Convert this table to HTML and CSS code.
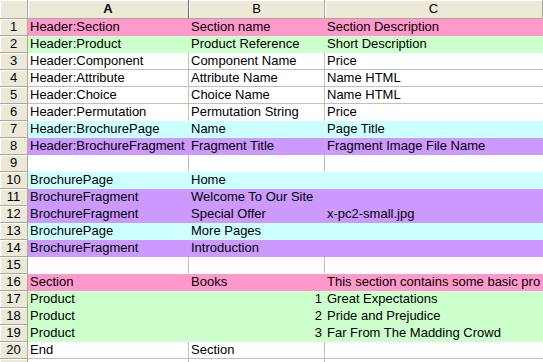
FILE: index.html
```html
<!DOCTYPE html>
<html>
<head>
<meta charset="utf-8">
<link rel="stylesheet" href="styles.css">
</head>
<body>
<div class="sheet">
  <div class="row head">
    <div class="corner"></div>
    <div class="ch sel">A</div>
    <div class="ch">B</div>
    <div class="ch">C</div>
  </div>
  <div class="row pink"><div class="rh">1</div><div class="c">Header:Section</div><div class="c">Section name</div><div class="c">Section Description</div></div>
  <div class="row green"><div class="rh">2</div><div class="c">Header:Product</div><div class="c">Product Reference</div><div class="c">Short Description</div></div>
  <div class="row"><div class="rh">3</div><div class="c">Header:Component</div><div class="c">Component Name</div><div class="c">Price</div></div>
  <div class="row"><div class="rh">4</div><div class="c">Header:Attribute</div><div class="c">Attribute Name</div><div class="c">Name HTML</div></div>
  <div class="row"><div class="rh">5</div><div class="c">Header:Choice</div><div class="c">Choice Name</div><div class="c">Name HTML</div></div>
  <div class="row nb"><div class="rh">6</div><div class="c">Header:Permutation</div><div class="c">Permutation String</div><div class="c">Price</div></div>
  <div class="row cyan"><div class="rh">7</div><div class="c">Header:BrochurePage</div><div class="c">Name</div><div class="c">Page Title</div></div>
  <div class="row lav"><div class="rh">8</div><div class="c">Header:BrochureFragment</div><div class="c">Fragment Title</div><div class="c">Fragment Image File Name</div></div>
  <div class="row nb"><div class="rh">9</div><div class="c"></div><div class="c"></div><div class="c"></div></div>
  <div class="row cyan"><div class="rh">10</div><div class="c">BrochurePage</div><div class="c">Home</div><div class="c"></div></div>
  <div class="row lav"><div class="rh">11</div><div class="c">BrochureFragment</div><div class="c">Welcome To Our Site</div><div class="c"></div></div>
  <div class="row lav"><div class="rh">12</div><div class="c">BrochureFragment</div><div class="c">Special Offer</div><div class="c">x-pc2-small.jpg</div></div>
  <div class="row cyan"><div class="rh">13</div><div class="c">BrochurePage</div><div class="c">More Pages</div><div class="c"></div></div>
  <div class="row lav"><div class="rh">14</div><div class="c">BrochureFragment</div><div class="c">Introduction</div><div class="c"></div></div>
  <div class="row nb"><div class="rh">15</div><div class="c"></div><div class="c"></div><div class="c"></div></div>
  <div class="row pink"><div class="rh">16</div><div class="c">Section</div><div class="c">Books</div><div class="c">This section contains some basic pro</div></div>
  <div class="row green"><div class="rh">17</div><div class="c">Product</div><div class="c num">1</div><div class="c">Great Expectations</div></div>
  <div class="row green"><div class="rh">18</div><div class="c">Product</div><div class="c num">2</div><div class="c">Pride and Prejudice</div></div>
  <div class="row green"><div class="rh">19</div><div class="c">Product</div><div class="c num">3</div><div class="c">Far From The Madding Crowd</div></div>
  <div class="row"><div class="rh">20</div><div class="c">End</div><div class="c">Section</div><div class="c"></div></div>
  <div class="row"><div class="rh"></div><div class="c"></div><div class="c"></div><div class="c"></div></div>
</div>
</body>
</html>
```
FILE: styles.css
```css
html, body {
  margin: 0;
  padding: 0;
  background: #ffffff;
}
body {
  width: 543px;
  height: 362px;
  overflow: hidden;
  font-family: "Liberation Sans", Arial, sans-serif;
  font-size: 13px;
  color: #000000;
}
.sheet {
  display: grid;
  grid-template-columns: 28px 161px 136px 1fr;
  grid-template-rows: 19px;
  grid-auto-rows: 17px;
  width: 543px;
}
.row {
  display: contents;
}
.corner,
.ch {
  box-sizing: border-box;
  background: #ece9d8;
  border-bottom: 1px solid #aca899;
  border-right: 1px solid #aca899;
  box-shadow: inset 1px 1px 0 #ffffff;
  text-align: center;
  line-height: 18px;
}
.ch.sel {
  font-weight: bold;
  border-right-color: #716f64;
}
.rh {
  box-sizing: border-box;
  background: #ece9d8;
  border-bottom: 1px solid #aca899;
  border-right: 1px solid #aca899;
  box-shadow: inset 1px 1px 0 #ffffff;
  text-align: center;
  line-height: 16px;
}
.c {
  box-sizing: border-box;
  border-right: 1px solid #c0c0c0;
  border-bottom: 1px solid #c0c0c0;
  padding: 0 2px 0 2px;
  line-height: 16px;
  white-space: nowrap;
  overflow: hidden;
}
.c:last-child {
  border-right: none;
  min-width: 0;
}
.num {
  text-align: right;
}
.row.nb .c {
  border-bottom-color: #ffffff;
}
.row.pink .c { background: #ff99cc; border-color: #ff99cc; }
.row.green .c { background: #ccffcc; border-color: #ccffcc; }
.row.cyan .c { background: #ccffff; border-color: #ccffff; }
.row.lav .c { background: #cc99ff; border-color: #cc99ff; }
```
